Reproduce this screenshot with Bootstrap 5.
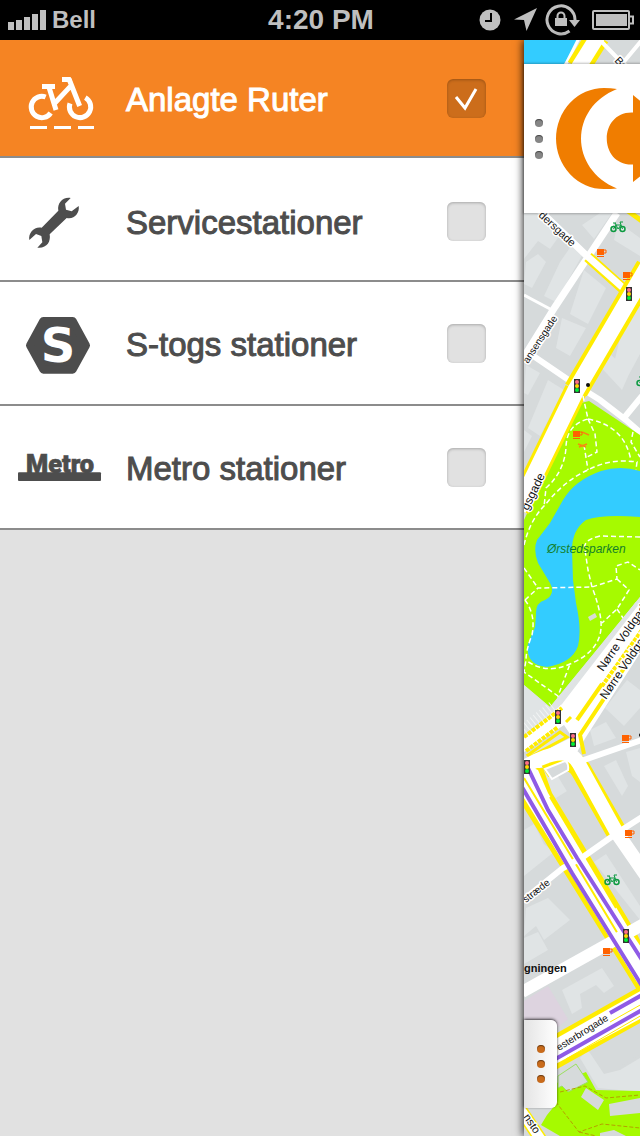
<!DOCTYPE html>
<html lang="da">
<head>
<meta charset="utf-8">
<meta name="viewport" content="width=device-width, initial-scale=1">
<title>Kortlag</title>
<link href="https://cdn.jsdelivr.net/npm/bootstrap@5.3.0/dist/css/bootstrap.min.css" rel="stylesheet">
<style>
  body { font-family: "Liberation Sans", Arial, sans-serif; background: #e1e1e1; }
  .status-bar { height: 40px; background: #000; color: #bfbfbf; font-weight: 700; line-height: 40px; padding: 0 6px 0 8px; }
  .carrier { font-size: 24px; }
  .clock-text { font-size: 28px; }
  .layer-row { height: 124px; padding: 0 38px 0 18px; gap: 24px; color: #4d4d4d; background: #fff; border-bottom: 2px solid #8c8c8c; cursor: pointer; }
  .layer-row.is-on { height: 118px; color: #fff; background: #f58423; }
  .layer-icon { width: 84px; height: 64px; }
  .layer-name { font-size: 33px; line-height: 36px; -webkit-text-stroke: 1px currentColor; padding-top: 3px; }
  .layer-check.form-check-input { width: 39px; height: 39px; margin: 0; border: 0; border-radius: 6px; background-color: #e1e1e1; box-shadow: inset 0 1px 3px rgba(0,0,0,.25); }
  .layer-check.form-check-input:checked { background-color: #cc6d1b; background-size: 39px 39px;
    background-image: url("data:image/svg+xml,%3csvg xmlns='http://www.w3.org/2000/svg' viewBox='0 0 39 39'%3e%3cpath d='M9 18l9 11L29 10' fill='none' stroke='%23fff' stroke-width='3'/%3e%3c/svg%3e"); }
  .map-pane { width: 116px; box-shadow: -1px 0 8px rgba(0,0,0,.85); }
  .map-brand { height: 149px; margin-top: 24px; background: #fff; box-shadow: 0 0 2px 1px rgba(0,0,0,.25); }
  .grip { border: 0; background: none; padding: 0; gap: 8px; }
  .grip-brand { width: 30px; }
  .grip i { width: 8px; height: 8px; border-radius: 50%; background: #868686; box-shadow: inset 0 1px 1px rgba(0,0,0,.5); }
  .grip-tab { width: 33px; height: 88px; gap: 7px; margin-bottom: 28px; border-radius: 0 6px 6px 0; background: linear-gradient(90deg, #e4e4e4, #fff); box-shadow: 0 -1px 3px rgba(0,0,0,.75); }
  .grip-tab i { background: #c96b1b; }
  .road-label { font-size: 11px; fill: #111; stroke: #fff; stroke-width: 3px; paint-order: stroke; stroke-linejoin: round; }
</style>
</head>
<body>
<div class="d-flex flex-column min-vh-100">
  <header class="status-bar row g-0 align-items-center flex-shrink-0">
    <div class="col d-flex align-items-center gap-1">
      <svg width="40" height="20" viewBox="0 0 40 20" fill="#bfbfbf" aria-hidden="true"><path d="M0 12h6v8H0zM8 10h6v10H8zM16 7h6v13h-6zM24 4h6v16h-6zM32 0h6v20h-6z"/></svg>
      <span class="carrier">Bell</span>
    </div>
    <div class="col-auto clock-text">4:20 PM</div>
    <div class="col d-flex align-items-center justify-content-end gap-2">
      <svg class="me-1" width="22" height="22" viewBox="476 9 22 22" aria-hidden="true"><circle cx="487" cy="20" r="10.5" fill="#bfbfbf"/><path d="M488 13v8H482" fill="none" stroke="#000" stroke-width="2"/></svg>
      <svg width="24" height="24" viewBox="511 8 24 24" aria-hidden="true"><path d="M535 8 512 19.500l10 .5 2.500 11z" fill="#bfbfbf"/></svg>
      <svg class="me-1" width="35" height="34" viewBox="544 2 35 34" aria-hidden="true"><path d="M574 19A14 14 0 1 0 568.500 30" fill="none" stroke="#bfbfbf" stroke-width="3"/><path d="M568 19h11l-5.500 7z" fill="#bfbfbf"/><path d="M554 17h12v8h-12z" fill="#bfbfbf"/><path d="M556.500 17v-2a3.500 3.500 0 0 1 7 0v2" fill="none" stroke="#bfbfbf" stroke-width="2"/></svg>
      <svg width="42" height="22" viewBox="592 8 42 22" aria-hidden="true"><rect x="593" y="10" width="36" height="18" rx="1" fill="none" stroke="#bfbfbf" stroke-width="2"/><path d="M596 13h31v12h-31z" fill="#bfbfbf"/><path d="M630 15.500h3v7h-3" fill="none" stroke="#bfbfbf" stroke-width="2"/></svg>
    </div>
  </header>

  <div class="d-flex flex-grow-1">
    <main class="flex-grow-1">
      <label class="layer-row is-on d-flex align-items-center" for="ruter">
        <svg class="layer-icon" viewBox="54 198 252 192" aria-hidden="true">
          <g fill="none" stroke="#fff" stroke-width="15">
            <path d="M137 291A32 32 0 1 0 152 339"/>
            <path d="M256 293A32 32 0 1 1 210 310"/>
            <path d="M147 262L168 330M162 312L214 256M207 237L239 318"/>
          </g>
          <path d="M126 252h39v15h-39zM186 231h26l5 15h-31zM90 378h51v9H90zM162 378h51v9h-51zM234 378h48v9h-48z" fill="#fff"/>
        </svg>
        <span class="layer-name flex-grow-1">Anlagte Ruter</span>
        <input class="layer-check form-check-input" type="checkbox" id="ruter" checked>
      </label>
      <label class="layer-row pt-1 d-flex align-items-center" for="service">
        <svg class="layer-icon" viewBox="54 87 252 192" aria-hidden="true">
          <path d="M212 114L195 131 198 149 215 154 236 138C240 158 222 180 200 174L149 223C153 246 140 266 112 263L127 247 124 228 108 222 88 240C84 218 104 198 125 203L175 152C171 130 188 110 212 114z" fill="#4d4d4d"/>
        </svg>
        <span class="layer-name flex-grow-1">Servicestationer</span>
        <input class="layer-check form-check-input" type="checkbox" id="service">
      </label>
      <label class="layer-row d-flex align-items-center" for="stog">
        <svg class="layer-icon" viewBox="54 453 252 192" aria-hidden="true">
          <path d="M130 483h88l40 73-40 73h-88l-40-73z" fill="#4d4d4d" stroke="#4d4d4d" stroke-width="24" stroke-linejoin="round"/>
          <text x="174" y="607" text-anchor="middle" font-family="DejaVu Sans, sans-serif" font-weight="700" font-size="144" fill="#fff">S</text>
        </svg>
        <span class="layer-name flex-grow-1">S-togs stationer</span>
        <input class="layer-check form-check-input" type="checkbox" id="stog">
      </label>
      <label class="layer-row d-flex align-items-center" for="metro">
        <svg class="layer-icon" viewBox="54 825 252 192" aria-hidden="true" fill="#4d4d4d">
          <text x="180" y="940" text-anchor="middle" font-family="Roboto, sans-serif" font-weight="900" font-size="76" stroke="#4d4d4d" stroke-width="2">Metro</text>
          <rect x="54" y="937" width="249" height="26" rx="3"/>
        </svg>
        <span class="layer-name flex-grow-1">Metro stationer</span>
        <input class="layer-check form-check-input" type="checkbox" id="metro">
      </label>
    </main>

    <aside class="map-pane position-relative d-flex flex-column flex-shrink-0">
      <svg class="position-absolute top-0 start-0 w-100 h-100" viewBox="524 40 116 1096" preserveAspectRatio="xMinYMin slice" role="img" aria-label="Kort over København">
        <defs>
          <g id="light"><rect x="-3" y="-7" width="6" height="14" fill="#333"/><circle cy="-4" r="2" fill="#ff6f86"/><circle r="2" fill="#ffd800"/><circle cy="4" r="2" fill="#0e3"/></g>
          <g id="cup"><path d="M-4-4h7v6h-7zM-4 3h7v1h-7z" fill="#ff6200"/><path d="M3-3h2v3H3" fill="none" stroke="#ff6200"/></g>
          <g id="bike" fill="none" stroke="#0c9a40"><circle cx="-4.500" cy="2" r="2.500" stroke-width="1.500"/><circle cx="4.500" cy="2" r="2.500" stroke-width="1.500"/><path d="M-4.500 2L-2-2H3L0 2-3-4M4.500 2L2-5H5M-5-4h3"/></g>
        </defs>
        <rect x="524" y="40" width="116" height="1096" fill="#d6dadb"/>
        <!-- lighter courtyards -->
        <path fill="#e0e4e5" d="M524 213h14l22 22-10 14-12-8-14 18zM526 262l12-8 8 8-14 26-8-4zM560 262l14-20 10 10-28 50-12-6zM584 270l22 18-18 36-18-10zM562 318l24 10-16 28-14-8zM600 213h12l-18 26-12-14zM618 222l22 16v18l-26-16zM620 338l20-34v50l-14 26-14-8zM596 362l14-8 20 18-8 18zM526 365l14 8-12 22-4-2zM548 380l16 10-24 46-12-8 10-24zM524 430l8 6-8 16zM605 708l22-28 13 10v18l-16 18zM590 730l16-8 10 16-22 8zM604 766l12-6 12 26-6 10zM626 752l14-4v34l-8-6zM540 776l14-6 40 66 8 8-10 6zM524 830l10-6 10 20 10 8-30 24zM594 862l12-8 34 52v14zM526 908l22-10 22 22-26 20-8-14-12 10zM524 938l14-6 10 18-24 14zM562 990l40-22 12 18-10 7-8-8-16 9 2 14-10 6zM580 1058l8-8 16 24 16-4 20-12v34l-42-4z"/>
        <path fill="#d6dadb" d="M556 798l22-14 40 60-26 18zM598 1046l42-22v30l-22 14z"/>
        <path fill="#ddd3df" d="M524 1001l24-15 20 33-10 8-34 2z"/>
        <!-- harbour and streets at the top -->
        <path fill="#33ccff" d="M524 40h54l-14 24h-40z"/>
        <path d="M579 38L565 66" stroke="#fff" stroke-width="3"/>
        <path d="M598 36L578 68" stroke="#ffec00" stroke-width="24"/><path d="M598 36L578 68" stroke="#fff" stroke-width="15"/>
        <g fill="none" stroke="#fff">
          <path d="M600 40L625 66M642 40L622 64" stroke-width="4"/>
          <path d="M534 205L589 258M617 213L555 307L524 357" stroke-width="7"/>
          <path d="M524 295L552 310" stroke-width="3"/>
          <path d="M529 353L573 383L600 400L626 420L642 434M624 418L642 396" stroke-width="6"/>
        </g>
        <path d="M628 211L642 221" stroke="#ffec00" stroke-width="5"/>
        <path d="M588 257L627 292" stroke="#ffec00" stroke-width="11"/>
        <path d="M587 256L640 303" stroke="#fff" stroke-width="7"/>
        <!-- park -->
        <path fill="#a6fa00" d="M577 404l12-3 33 22 18 12v162L550 707l-26-22V520z"/>
        <path fill="none" stroke="#ffec00" stroke-width="25" d="M648 267L576 390"/>
        <path fill="none" stroke="#ffec00" stroke-width="23" d="M576 390L518 509"/>
        <path fill="none" stroke="#fff" stroke-width="17" d="M648 267L576 390L518 509"/>
        <path fill="#33ccff" d="M640 471Q620 465 601 471Q575 480 563 500L550 523 537 540Q533 550 538 563L550 583Q556 594 545 600Q535 603 536 615L535 627 528 644Q525 665 547 667Q572 663 578 646Q582 630 576 603L573 580 572 550Q572 530 586 520Q602 514 640 517z"/>
        <path fill="none" stroke="#fff" stroke-width="1.500" stroke-dasharray="5 3" d="M583 396L588 419Q566 425 566 448Q564 472 546 488L544 507M588 419Q625 426 631 461M588 419L595 434L597 452L585 458M584 445L588 470M524 545Q530 520 545 505Q565 480 588 470Q610 458 637 462L636 470M633 432L631 442L640 457M640 537L600 536Q582 540 585 550L588 570L592 587Q600 608 601 622Q603 650 570 664Q545 675 526 660M525 600L538 588L592 587L617 579L616 566L628 562L640 570M524 568L538 588M617 579L629 590L617 609L602 623M617 609L623 618M525 600Q536 615 532 635Q526 650 526 660L524 672L558 696L570 664M558 696L561 707"/>
        <path fill="#d8dbd5" d="M588 617l7-4 2 4-7 4z"/>
        <path d="M582 432l7 3M578 444l8 3M579 447l8-3" stroke="#f58a10" stroke-width="1.500"/>
        <!-- Nørre Voldgade -->
        <path fill="#e0e4e5" d="M640 597L550 707 524 685v55l116-110z"/>
        <path d="M524 730L554 706" stroke="#f2f4f4" stroke-dasharray="1 3" stroke-width="12"/>
        <path fill="#fff" d="M640 603L562 704 524 738v14l40-27 8 12-48 24v12l50-16 12-20L642 650z"/>
        <path d="M637 603L562 700" stroke="#dfe3e4" stroke-width="3"/>
        <path fill="#dfe3e4" stroke="#ffec00" stroke-width="3" d="M528 755L560 732 567 737 530 757z"/>
        <path fill="none" stroke="#ffec00" stroke-width="4" d="M642 641L580 735L584 754M577 720L602 684"/>
        <path fill="none" stroke="#ffec00" stroke-width="4" stroke-dasharray="4 1" d="M642 630L602 686M524 737L562 708M526 751L558 727"/>
        <path fill="none" stroke="#ffec00" stroke-width="3" d="M566 722L571 717"/>
        <!-- railway boulevard and side streets -->
        <path fill="#ffec00" d="M524 768L543 768 552 793 637 934 650 960v40L637 990 524 808z"/>
        <path fill="#fff" d="M524 764L538 770 548 793 632 934 650 960v30L637 982 524 798z"/>
        <path fill="none" stroke="#ffec00" stroke-width="2" d="M524 778L618 934M550 797L616 908"/>
        <path fill="none" stroke="#ffec00" stroke-width="21" d="M543 768Q570 752 581 770L617 833"/>
        <path fill="none" stroke="#fff" stroke-width="14" d="M526 766Q568 742 579 764L617 833L646 875"/>
        <path fill="none" stroke="#fff" stroke-width="6" d="M578 762L642 740M642 817L617 833L583 857L563 868L522 901"/>
        <path fill="#d6dadb" stroke="#fff" stroke-width="2" d="M545 769l20-8q4 2 3 9l-16 9z"/>
        <path d="M522 992L644 924" stroke="#fff" stroke-width="12"/>
        <path fill="none" stroke="#8f5be6" stroke-width="4" d="M528 768L548 810L577 858L642 960M522 787L572 873L642 986"/>
        <!-- Vesterbrogade -->
        <path fill="#ffec00" d="M550 1037L642 985v37L550 1073z"/>
        <path fill="#fff" d="M550 1042L642 990v28L550 1067z"/>
        <path fill="none" stroke="#ffec00" stroke-width="1" d="M610 1022L642 1004M566 1059L642 1015"/>
        <path fill="none" stroke="#8f5be6" stroke-width="4" d="M610 1013L642 995M552 1061L642 1010"/>
        <!-- gardens at the bottom -->
        <path fill="#a6fa00" d="M556 1104l-2-20 32-12 10 18 44 1v45h-80l-19-11 6-10z"/>
        <path fill="#d6dadb" stroke="#9be060" d="M558 1076l18-12 12 18-20 10-6-6-4 2z"/>
        <path fill="#d6dadb" d="M586 1088l18 12-6 10-17-13zM609 1104l31-6v15l-30 3zM600 1133l14-3 12 6h-26z"/>
        <path fill="none" stroke="#b5a000" stroke-dasharray="4 2" d="M552 1097L579 1132L602 1124L640 1128M560 1092L585 1086L606 1098L640 1095M579 1132L596 1136"/>
        <path d="M518 1106L541 1140" stroke="#ffec00" stroke-width="13"/><path d="M518 1106L541 1140" stroke="#fff" stroke-width="10"/>
        <!-- labels -->
        <g class="road-label">
          <text transform="translate(538 216) rotate(43)">dersgade</text>
          <text transform="translate(528 364) rotate(-57)" style="font-size:10px">ansensgade</text>
          <text transform="translate(528 511) rotate(-64)" style="font-size:12px">gsgade</text>
          <text transform="translate(603 672) rotate(-55)" style="font-size:12px">Nørre Voldgade</text>
          <text transform="translate(606 700) rotate(-56)" style="font-size:12px">Nørre Voldgade</text>
          <text transform="translate(526 903) rotate(-38)" style="font-size:10px">stræde</text>
          <text transform="translate(559 1051) rotate(-32)" style="font-size:10px">esterbrogade</text>
          <text transform="translate(523 1117) rotate(56)">nsto</text>
          <text transform="translate(614 61) rotate(46)">Bo</text>
        </g>
        <text x="524" y="972" font-size="11" font-weight="700" fill="#111">gningen</text>
        <text x="547" y="553" font-size="12" font-style="italic" fill="#14802a">Ørstedsparken</text>
        <!-- pins -->
        <use href="#light" x="629" y="294"/><use href="#light" x="577" y="386"/><use href="#light" x="558" y="717"/><use href="#light" x="573" y="740"/><use href="#light" x="527" y="767"/><use href="#light" x="626" y="936"/>
        <use href="#cup" x="601" y="253"/><use href="#cup" x="627" y="276"/><use href="#cup" x="577" y="435"/><use href="#cup" x="626" y="739"/><use href="#cup" x="629" y="834"/><use href="#cup" x="607" y="952"/>
        <use href="#bike" x="618" y="227"/><use href="#bike" x="612" y="880"/><use href="#bike" x="644" y="381"/>
        <circle cx="588" cy="385" r="2" fill="#111"/><circle cx="641" cy="735" r="2" fill="#111"/>
      </svg>

      <div class="map-brand position-relative d-flex align-items-center overflow-hidden flex-shrink-0">
        <button class="grip grip-brand flex-shrink-0 d-flex flex-column align-items-center" type="button" aria-label="Menu"><i></i><i></i><i></i></button>
        <svg class="flex-shrink-0" width="92" height="102" viewBox="554 87 92 102" fill="#f07d00" aria-hidden="true">
          <path d="M617 88Q611 87 604 87A48 50.500 0 0 0 604 188Q611 188 617 187.500C569 168 569 107 617 88z"/>
          <path d="M633 94L660 116V160L633 181V163.500C598 165 598 110 633 111.500z"/>
        </svg>
      </div>
      <button class="grip grip-tab position-relative mt-auto d-flex flex-column align-items-center justify-content-center" type="button" aria-label="Kortmenu"><i></i><i></i><i></i></button>
    </aside>
  </div>
</div>
<script src="https://cdn.jsdelivr.net/npm/bootstrap@5.3.0/dist/js/bootstrap.bundle.min.js"></script>
</body>
</html>
